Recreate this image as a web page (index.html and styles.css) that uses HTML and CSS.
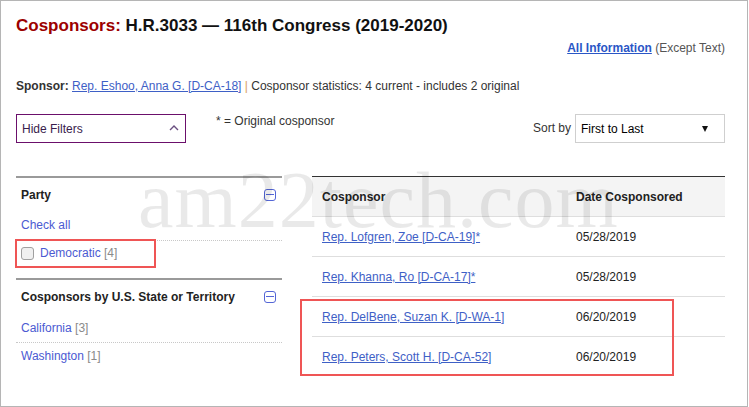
FILE: index.html
```html
<!DOCTYPE html>
<html lang="en">
<head>
<meta charset="utf-8">
<title>Cosponsors: H.R.3033</title>
<link rel="stylesheet" href="styles.css">
</head>
<body>
<div class="page">
  <h1 class="title"><span class="title-red">Cosponsors:</span> H.R.3033 — 116th Congress (2019-2020)</h1>
  <div class="allinfo"><a href="#" class="allinfo-link">All Information</a> <span class="muted">(Except Text)</span></div>
  <div class="sponsor"><b class="sponsor-label">Sponsor:</b> <a href="#" class="link">Rep. Eshoo, Anna G. [D-CA-18]</a> <span class="pipe">|</span> Cosponsor statistics: 4 current - includes 2 original</div>

  <div class="controls">
    <div class="hide-filters">
      <span>Hide Filters</span>
      <svg class="chev" width="10" height="6" viewBox="0 0 10 6"><polyline points="1,5 5,1 9,5" fill="none" stroke="#6a4f80" stroke-width="1.4"/></svg>
    </div>
    <div class="legend">* = Original cosponsor</div>
    <div class="sort">
      <span class="sort-label">Sort by</span>
      <div class="select"><span>First to Last</span><span class="arrow"></span></div>
    </div>
  </div>

  <div class="main">
    <aside class="filters">
      <section class="facet">
        <div class="facet-head"><span>Party</span><span class="minus"></span></div>
        <div class="facet-item item-check"><a href="#" class="flink">Check all</a></div>
        <div class="facet-item item-dem"><span class="cb"></span><span class="label"><a href="#" class="flink">Democratic</a> <span class="count">[4]</span></span></div>
      </section>
      <section class="facet">
        <div class="facet-head"><span>Cosponsors by U.S. State or Territory</span><span class="minus"></span></div>
        <div class="facet-item item-ca"><span class="label"><a href="#" class="flink">California</a> <span class="count">[3]</span></span></div>
        <div class="facet-item item-wa"><span class="label"><a href="#" class="flink">Washington</a> <span class="count">[1]</span></span></div>
      </section>
    </aside>

    <div class="table">
      <div class="row head">
        <div class="cell c1">Cosponsor</div>
        <div class="cell c2">Date Cosponsored</div>
      </div>
      <div class="row">
        <div class="cell c1"><a href="#" class="link">Rep. Lofgren, Zoe [D-CA-19]*</a></div>
        <div class="cell c2">05/28/2019</div>
      </div>
      <div class="row">
        <div class="cell c1"><a href="#" class="link">Rep. Khanna, Ro [D-CA-17]*</a></div>
        <div class="cell c2">05/28/2019</div>
      </div>
      <div class="row">
        <div class="cell c1"><a href="#" class="link">Rep. DelBene, Suzan K. [D-WA-1]</a></div>
        <div class="cell c2">06/20/2019</div>
      </div>
      <div class="row last">
        <div class="cell c1"><a href="#" class="link">Rep. Peters, Scott H. [D-CA-52]</a></div>
        <div class="cell c2">06/20/2019</div>
      </div>
    </div>
  </div>

  <div class="watermark">am22tech.com</div>
  <div class="mark mark-left"></div>
  <div class="mark mark-right"></div>
</div>
</body>
</html>
```

FILE: styles.css
```css
html, body {
  margin: 0;
  padding: 0;
  background: #fff;
}

.page {
  position: relative;
  width: 748px;
  height: 407px;
  box-sizing: border-box;
  border: 1px solid #b5b5b5;
  padding: 15px 22px 0 15px;
  font-family: "Liberation Sans", Arial, sans-serif;
  font-size: 12px;
  line-height: 16px;
  color: #333;
  overflow: hidden;
}

a {
  text-decoration: underline;
}

.title {
  margin: 0;
  font-size: 17px;
  line-height: 20px;
  font-weight: bold;
  color: #111;
}

.title-red {
  color: #9c0000;
}

.allinfo {
  margin-top: 4px;
  text-align: right;
  color: #555;
}

.allinfo-link {
  color: #2a56c6;
  font-weight: bold;
}

.sponsor {
  margin-top: 22px;
  color: #333;
}

.sponsor-label {
  color: #333;
}

.link {
  color: #3e60c6;
}

.pipe {
  color: #d9a15c;
}

.controls {
  margin-top: 20px;
  display: flex;
  align-items: flex-start;
  height: 29px;
}

.hide-filters {
  width: 170px;
  height: 29px;
  box-sizing: border-box;
  border: 1px solid #6b0f6b;
  display: flex;
  align-items: center;
  justify-content: space-between;
  padding: 0 6px 0 5px;
  color: #3a1d4c;
}

.chev {
  display: block;
  margin-top: -1px;
}

.legend {
  margin-left: 30px;
  margin-top: -1px;
  color: #333;
}

.sort {
  margin-left: auto;
  display: flex;
  align-items: center;
  gap: 4px;
}

.sort-label {
  color: #333;
  margin-top: -2px;
}

.select {
  width: 150px;
  height: 29px;
  box-sizing: border-box;
  border: 1px solid #cfcfcf;
  display: flex;
  align-items: center;
  justify-content: space-between;
  padding: 0 16px 0 5px;
  color: #000;
}

.arrow {
  width: 0;
  height: 0;
  border-left: 3.5px solid transparent;
  border-right: 3.5px solid transparent;
  border-top: 6px solid #111;
}

.main {
  margin-top: 33px;
  display: flex;
  gap: 30px;
}

.filters {
  width: 266px;
}

.facet {
  border-top: 2px solid #9a9a9a;
}

.facet-head {
  display: flex;
  justify-content: space-between;
  align-items: center;
  padding: 9px 6px 7px 5px;
  font-weight: bold;
  color: #222;
}

.minus {
  position: relative;
  width: 12px;
  height: 12px;
  box-sizing: border-box;
  border: 1px solid #5466d6;
  border-radius: 3px;
}

.minus::after {
  content: "";
  position: absolute;
  left: 1px;
  right: 1px;
  top: 4px;
  height: 1px;
  background: #5466d6;
}

.facet-item {
  display: flex;
  align-items: center;
  padding-left: 5px;
}

.item-check {
  padding-top: 7px;
  padding-bottom: 7px;
  border-bottom: 1px dotted #c8c8c8;
}

.item-dem {
  padding-top: 4px;
  padding-bottom: 17px;
}

.item-ca {
  padding-top: 8px;
  padding-bottom: 6px;
  border-bottom: 1px dotted #c8c8c8;
}

.item-wa {
  padding-top: 5px;
}

.flink {
  color: #4b5ad2;
  text-decoration: none;
}

.count {
  color: #8a8a8a;
}

.cb {
  display: block;
  width: 13px;
  height: 13px;
  margin-right: 6px;
  box-sizing: border-box;
  border: 1px solid #a0a0a0;
  border-radius: 3px;
  background: #f0f0f0;
}

.table {
  width: 413px;
  border-top: 1px solid #333;
}

.row {
  display: flex;
  height: 40px;
  box-sizing: border-box;
  align-items: center;
  border-bottom: 1px solid #dedede;
}

.row.last {
  border-bottom: none;
}

.row.head {
  background: #f4f4f4;
  font-weight: bold;
  color: #222;
}

.cell {
  box-sizing: border-box;
  padding: 0 10px;
}

.c1 {
  width: 254px;
}

.c2 {
  color: #222;
}

.watermark {
  position: absolute;
  left: 137px;
  top: 159px;
  font-family: "Liberation Serif", "Times New Roman", serif;
  font-size: 80px;
  line-height: 80px;
  letter-spacing: 1px;
  color: rgba(0, 0, 0, 0.085);
  pointer-events: none;
  white-space: nowrap;
}

.mark {
  position: absolute;
  border: 2px solid #ef5555;
  box-sizing: border-box;
  pointer-events: none;
}

.mark-left {
  left: 14px;
  top: 238px;
  width: 141px;
  height: 29px;
}

.mark-right {
  left: 299px;
  top: 298px;
  width: 374px;
  height: 77px;
}
```
